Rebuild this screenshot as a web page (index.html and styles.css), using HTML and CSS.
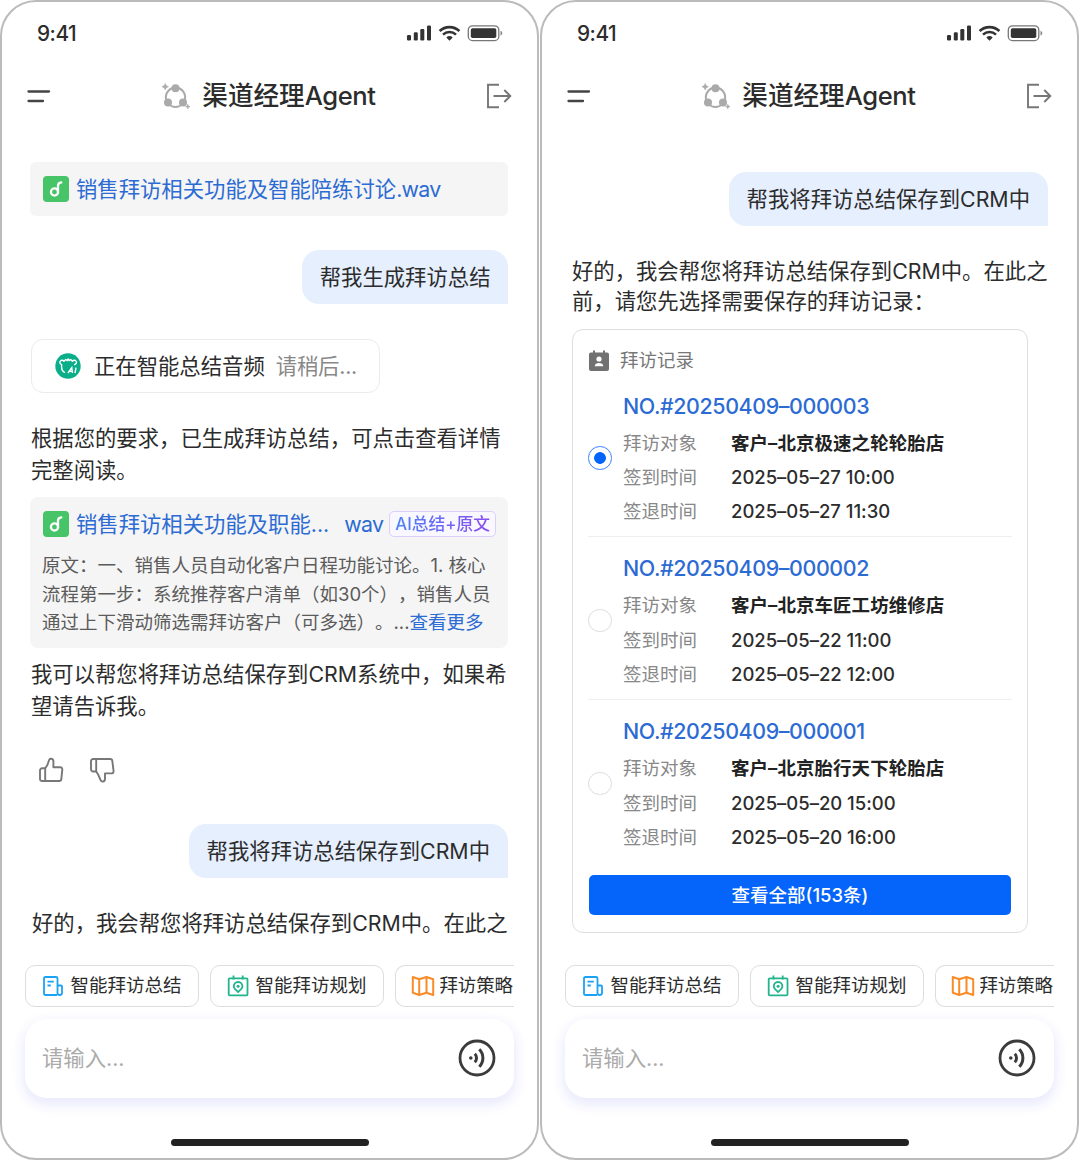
FILE: index.html
```html
<!DOCTYPE html>
<html lang="zh-CN">
<head>
<meta charset="utf-8">
<title>渠道经理Agent</title>
<link rel="stylesheet" href="styles.css">
</head>
<body>
<svg class="sprite" aria-hidden="true">
  <symbol id="i-status" viewBox="0 0 98 20">
    <g fill="#333">
      <rect x="1" y="12" width="4" height="5.5" rx="1.2"/><rect x="7.800" y="9.300" width="4" height="8.200" rx="1.200"/><rect x="14.300" y="6" width="4" height="11.500" rx="1.200"/><rect x="21" y="2.500" width="4" height="15" rx="1.200"/>
      <path d="M43.500 17.800l-3.200-3.300a4.700 4.700 0 0 1 6.400 0z"/>
      <rect x="64.800" y="5.300" width="25.500" height="9.800" rx="1.800"/>
      <path d="M94.500 7.800c2.400.8 2.400 4 0 4.800z" fill="#888"/>
    </g>
    <path d="M33.600 8a14.500 14.500 0 0 1 19.800 0M37 11.600a9.600 9.600 0 0 1 13 0" fill="none" stroke="#333" stroke-width="2.600"/>
    <rect x="62.300" y="2.800" width="30.500" height="14.800" rx="4.200" fill="none" stroke="#777" stroke-width="1.300"/>
  </symbol>
  <symbol id="i-menu" viewBox="0 0 24 16">
    <path d="M1.500 2.500h20.500M1.500 12h14.500" stroke="#444" stroke-width="2.300" stroke-linecap="round"/>
  </symbol>
  <symbol id="i-agent" viewBox="0 0 28 28">
    <circle cx="13.500" cy="15.300" r="9.700" fill="none" stroke="#aaa" stroke-width="2"/>
    <g fill="#aaa"><circle cx="13.500" cy="6.300" r="4"/><circle cx="6" cy="20.500" r="4"/><circle cx="21" cy="20.500" r="4"/>
    <path d="M3.200 1.500l1 2.200 2.200 1-2.200 1-1 2.200-1-2.200-2.200-1 2.200-1zM25.800 22.300l.6 1.700 1.700.6-1.700.6-.6 1.700-.6-1.700-1.700-.6 1.700-.6z" stroke="#aaa" stroke-width=".6"/></g>
  </symbol>
  <symbol id="i-exit" viewBox="0 0 26 26">
    <path d="M13 1.800H2v22.400h11M7.500 13H24M18.300 7l6 6-6 6" fill="none" stroke="#777" stroke-width="1.900"/>
  </symbol>
  <symbol id="i-audio" viewBox="0 0 26 26">
    <rect width="26" height="26" rx="4" fill="#47c368"/>
    <circle cx="11.500" cy="16" r="3.600" fill="none" stroke="#fff" stroke-width="2.300"/>
    <path d="M15 16.500V9.600c0-2 1-3.100 3.300-3.300" fill="none" stroke="#fff" stroke-width="2.300" stroke-linecap="round"/>
  </symbol>
  <symbol id="i-ai" viewBox="0 0 26 26">
    <circle cx="13" cy="13" r="12.700" fill="#0aaf89"/>
    <path d="M9.500 19.300c-2-.9-2.900-2.500-2.900-5.100v-2.700C4.500 11.200 4.200 8.500 6 7.500c1.300-.6 2.300-.2 3 .7l1.700-1.700 1.500 1.100 1-1.700 1 1.700 1.500-1.100L17.400 8.200c.7-.9 1.700-1.300 3-.7 1.700 1 1.300 3.500-.7 4" fill="none" stroke="#fff" stroke-width="1.400" stroke-linecap="round" stroke-linejoin="round"/>
    <path d="M13 20l3.800-5.300.6 5.300M14.500 18.400h3M20 20l1-5.300" fill="none" stroke="#fff" stroke-width="1.400"/>
  </symbol>
  <symbol id="i-up" viewBox="0 0 26 26">
    <path d="M7.200 11.300h-3A2.200 2.200 0 0 0 2 13.500v8.300A2.200 2.200 0 0 0 4.200 24h17c1.100 0 2-.8 2.100-1.800l1-9.600c.1-1.300-.8-2.300-2.100-2.300h-6.800V4.500c0-3.200-3.600-3.700-4.400-1.300L9.300 8.300zM7.200 11.300V24M7.200 11.300l2.100-3" fill="none" stroke="#777" stroke-width="1.900" stroke-linejoin="round"/>
  </symbol>
  <symbol id="i-down" viewBox="0 0 26 26">
    <path d="M7.200 14.500h-3A2.200 2.200 0 0 1 2 12.300V4.200A2.200 2.200 0 0 1 4.200 2h17c1.100 0 2 .8 2.100 1.800l1.300 10.300c.1 1.300-.8 2.300-2.100 2.300h-6.500v5.400c0 3.200-3.300 3.700-4.400 1.300L9.300 17.800zM7.200 14.500V2" fill="none" stroke="#777" stroke-width="1.900" stroke-linejoin="round"/>
  </symbol>
  <symbol id="i-doc" viewBox="0 0 22 22">
    <path d="M15 20H3.500C2.400 20 2 19.500 2 18.500V3.500C2 2.500 2.400 2 3.500 2H14c1 0 1.500.5 1.500 1.500V18c0 1.300.8 2 2 2s2.500-.7 2.500-2v-6.500c0-.7-.3-1-1-1h-3.500M5.500 6.700h6.300M5.500 10.500h3.300" fill="none" stroke="#1ba2f5" stroke-width="1.800"/>
  </symbol>
  <symbol id="i-plan" viewBox="0 0 22 22">
    <g fill="none" stroke="#22b48c" stroke-width="1.800"><rect x="1.700" y="3.300" width="18.800" height="17" rx="1"/><path d="M6.500.5v4M15.700.5v4M11.100 17c-3-2.400-4.300-4-4.300-5.700a4.300 4.300 0 0 1 8.600 0c0 1.700-1.300 3.300-4.300 5.700z"/></g>
    <circle cx="11.100" cy="11.300" r="1.500" fill="#22b48c"/>
  </symbol>
  <symbol id="i-map" viewBox="0 0 24 22">
    <path d="M1.800 2l6.400 2.200L15.500 2l6.700 2.200V20l-6.700-2.200L8.200 20l-6.400-2.200zM8.200 4.200V20M15.500 2v15.800" fill="none" stroke="#fa8c27" stroke-width="2" stroke-linejoin="round"/>
  </symbol>
  <symbol id="i-voice" viewBox="0 0 38 38">
    <circle cx="19" cy="19" r="17" fill="none" stroke="#3b3b3b" stroke-width="2.800"/>
    <circle cx="12.800" cy="19" r="1.800" fill="#3b3b3b"/>
    <path d="M16.800 14.800a6 6 0 0 1 0 8.400M21.300 10.200a12.600 12.600 0 0 1 0 17.600" fill="none" stroke="#3b3b3b" stroke-width="3"/>
  </symbol>
  <symbol id="i-contact" viewBox="0 0 22 22">
    <path d="M3 2.500h2V.5h2v2h8v-2h2v2h2c1.200 0 2 .7 2 2v14.500c0 1.200-.8 2-2 2H3c-1.200 0-2-.8-2-2V4.500c0-1.300.8-2 2-2z" fill="#717171"/>
    <circle cx="11" cy="9" r="2.600" fill="#fff"/><path d="M6.700 16.300c0-4.300 8.600-4.300 8.600 0z" fill="#fff"/>
  </symbol>
</svg>

<main class="screens">
  <section class="phone">
    <div class="status"><span>9:41</span><svg class="status-icons"><use href="#i-status"/></svg></div>
    <header class="header">
      <svg class="menu"><use href="#i-menu"/></svg>
      <h1 class="title"><svg class="agent"><use href="#i-agent"/></svg>渠道经理<span class="latin">Agent</span></h1>
      <svg class="exit"><use href="#i-exit"/></svg>
    </header>
    <div class="chat chat-summary">
      <div class="file"><svg class="audio"><use href="#i-audio"/></svg><a>销售拜访相关功能及智能陪练讨论<span class="ext">.wav</span></a></div>
      <div class="bubble bubble-first">帮我生成拜访总结</div>
      <div class="progress"><svg class="ai"><use href="#i-ai"/></svg><span>正在智能总结音频</span><span class="wait">请稍后...</span></div>
      <p class="text text-result">根据您的要求，已生成拜访总结，可点击查看详情<br>完整阅读。</p>
      <article class="summary">
        <div class="summary-head"><svg class="audio"><use href="#i-audio"/></svg><a class="summary-name">销售拜访相关功能及职能...</a><a class="ext">wav</a><span class="tag"><span class="tag-label">AI总结+原文</span></span></div>
        <p class="excerpt">原文：一、销售人员自动化客户日程功能讨论。1. 核心<br>流程第一步：系统推荐客户清单（如30个），销售人员<br>通过上下滑动筛选需拜访客户（可多选）。...<a>查看更多</a></p>
      </article>
      <p class="text text-offer">我可以帮您将拜访总结保存到CRM系统中，如果希<br>望请告诉我。</p>
      <div class="feedback"><svg><use href="#i-up"/></svg><svg><use href="#i-down"/></svg></div>
      <div class="bubble bubble-save">帮我将拜访总结保存到CRM中</div>
      <p class="text text-last">好的，我会帮您将拜访总结保存到CRM中。在此之</p>
    </div>
    <nav class="chips">
      <span class="chip"><svg><use href="#i-doc"/></svg>智能拜访总结</span>
      <span class="chip"><svg><use href="#i-plan"/></svg>智能拜访规划</span>
      <span class="chip chip-last"><svg class="map"><use href="#i-map"/></svg>拜访策略</span>
    </nav>
    <div class="input"><span>请输入...</span><svg><use href="#i-voice"/></svg></div>
    <div class="home"></div>
  </section>

  <section class="phone">
    <div class="status"><span>9:41</span><svg class="status-icons"><use href="#i-status"/></svg></div>
    <header class="header">
      <svg class="menu"><use href="#i-menu"/></svg>
      <h1 class="title"><svg class="agent"><use href="#i-agent"/></svg>渠道经理<span class="latin">Agent</span></h1>
      <svg class="exit"><use href="#i-exit"/></svg>
    </header>
    <div class="chat chat-records">
      <div class="bubble">帮我将拜访总结保存到CRM中</div>
      <p class="text text-choose">好的，我会帮您将拜访总结保存到CRM中。在此之<br>前，请您先选择需要保存的拜访记录：</p>
      <div class="records">
        <div class="records-head"><svg><use href="#i-contact"/></svg>拜访记录</div>
        <div class="record">
          <i class="radio checked"></i>
          <div><h2>NO.#20250409–000003</h2>
          <dl><dt>拜访对象</dt><dd class="customer">客户–北京极速之轮轮胎店</dd><dt>签到时间</dt><dd>2025–05–27 10:00</dd><dt>签退时间</dt><dd>2025–05–27 11:30</dd></dl></div>
        </div>
        <div class="record">
          <i class="radio"></i>
          <div><h2>NO.#20250409–000002</h2>
          <dl><dt>拜访对象</dt><dd class="customer">客户–北京车匠工坊维修店</dd><dt>签到时间</dt><dd>2025–05–22 11:00</dd><dt>签退时间</dt><dd>2025–05–22 12:00</dd></dl></div>
        </div>
        <div class="record">
          <i class="radio"></i>
          <div><h2>NO.#20250409–000001</h2>
          <dl><dt>拜访对象</dt><dd class="customer">客户–北京胎行天下轮胎店</dd><dt>签到时间</dt><dd>2025–05–20 15:00</dd><dt>签退时间</dt><dd>2025–05–20 16:00</dd></dl></div>
        </div>
        <button class="all">查看全部(153条)</button>
      </div>
    </div>
    <nav class="chips">
      <span class="chip"><svg><use href="#i-doc"/></svg>智能拜访总结</span>
      <span class="chip"><svg><use href="#i-plan"/></svg>智能拜访规划</span>
      <span class="chip chip-last"><svg class="map"><use href="#i-map"/></svg>拜访策略</span>
    </nav>
    <div class="input"><span>请输入...</span><svg><use href="#i-voice"/></svg></div>
    <div class="home"></div>
  </section>
</main>
</body>
</html>
```
FILE: styles.css
```css
* { box-sizing: border-box; }
body {
  margin: 0;
  background: #fff;
  color: #2c2c2c;
  font: 21.35px/31px Inter, "Noto Sans CJK SC", sans-serif;
  text-spacing-trim: space-all;
  white-space: nowrap;
}
h1, h2, p, dl, dd { margin: 0; font-weight: 400; }
a { color: #2c6bd3; }
svg { display: block; flex: none; }
.sprite { position: absolute; width: 0; height: 0; }
.screens { display: grid; grid-template-columns: 539px 539px; gap: 1px; }
.phone {
  display: flex;
  flex-direction: column;
  height: 1160px;
  border: 2.5px solid #bbb;
  border-radius: 36px;
  overflow: hidden;
}

.status { display: flex; justify-content: space-between; align-items: center; height: 62px; padding: 0 33px 0 35px; font-size: 20.8px; font-weight: 500; letter-spacing: -.5px; flex: none; }
.status-icons { width: 98px; height: 20px; }
.header { display: flex; justify-content: space-between; align-items: center; height: 64px; padding: 0 25px 0 25px; flex: none; }
.menu { width: 24px; height: 16px; margin-top: 2px; }
.exit { width: 26px; height: 26px; }
.title { display: flex; align-items: center; margin-left: 1px; padding-bottom: 1px; font-size: 25.6px; font-weight: 500; }
.agent { width: 28px; height: 28px; margin-right: 12px; }
.latin { letter-spacing: -.4px; }
.ext { letter-spacing: -.7px; }

.chat { display: flex; flex-direction: column; align-items: flex-start; height: 835px; flex: none; }
.chat-summary { padding: 34px 29px 0 28px; }
.file { display: flex; align-items: center; gap: 7px; align-self: stretch; height: 54px; padding-left: 13px; border-radius: 6px; background: #f5f5f5; }
.audio { width: 26px; height: 26px; }
.bubble { align-self: flex-end; height: 54px; padding: 0 17.5px; line-height: 54px; border-radius: 17px 17px 1px 17px; background: #e6effe; }
.bubble-first { margin-top: 34px; }
.progress { display: flex; align-items: center; height: 54px; width: 349px; margin: 35px 0 0 1px; padding-left: 23px; border: 1.5px solid #ebebeb; border-radius: 12px; }
.ai { width: 26px; height: 26px; margin-right: 13px; }
.wait { margin-left: 11px; color: #888; letter-spacing: -.2px; }
.text-result { margin: 30px 0 0 1px; line-height: 31.5px; }
.summary { align-self: stretch; height: 151px; margin-top: 11px; padding: 9px 12px 0 13px; border-radius: 8px; background: #f5f5f5; }
.summary-head { display: flex; align-items: center; height: 36px; }
.summary-name { margin: 0 15px 0 7px; }
.tag { margin-left: 6px; padding: 0 5px; border: 1.5px solid #dccffc; border-radius: 5px; background: #f9f7ff; font-size: 16.8px; line-height: 24px; font-weight: 500; }
.tag-label { background: linear-gradient(90deg, #4c83f6, #8a4cf0); background-clip: text; color: transparent; }
.excerpt { margin-top: 9px; color: #5b5b5b; font-size: 18.5px; line-height: 28.5px; margin-left: -1px; }
.text-offer { margin: 11px 0 0 1px; line-height: 31.5px; }
.feedback { display: flex; gap: 25px; margin: 35px 0 0 8px; }
.feedback svg { width: 26px; height: 26px; }
.bubble-save { margin-top: 41px; padding-left: 18px; padding-right: 18px; }
.text-last { margin: 30px 0 0 2px; }

.chat-records { padding: 43.5px 29px 0 30px; }
.chat-records .bubble { padding: 0 18px; }
.text-choose { margin-top: 30.5px; line-height: 30px; }
.records { width: 456px; height: 604px; margin-top: 13px; padding: 17px 15px 0; border: 1.5px solid #ddd; border-radius: 11px; }
.records-head { display: flex; align-items: center; gap: 10px; height: 27.5px; color: #777; font-size: 18.5px; }
.records-head svg { width: 22px; height: 22px; }
.record { display: flex; align-items: center; gap: 11.5px; height: 162.5px; padding-top: 5px; border-bottom: 1.5px solid #eee; }
.record:nth-of-type(4) { border-bottom: 0; }
.record h2 { margin: 4px 0; color: #2c6bd3; font-size: 21.4px; font-weight: 500; line-height: 31px; letter-spacing: -.38px; }
.radio { width: 23.5px; height: 23.5px; border: 1.5px solid #ddd; border-radius: 50%; flex: none; }
.checked { border-color: #3b82f6; background: radial-gradient(circle, #0565fb 5.5px, transparent 6.2px); }
.record dl { display: grid; grid-template-columns: 108px auto; grid-auto-rows: 34.2px; font-size: 18.5px; line-height: 34px; }
.record dt { color: #888; }
.record dd { font-weight: 500; letter-spacing: -.02px; }
.record .customer { color: #222; font-weight: 600; letter-spacing: .05px; }
.all { display: block; width: 422px; height: 40px; margin: 13px auto 0; padding: 0; border: 0; border-radius: 5px; background: #0565fb; color: #fff; font: 500 18.5px/40px Inter, "Noto Sans CJK SC", sans-serif; }

.chips { display: flex; gap: 11.5px; height: 42px; margin: 1.5px 23px 0; overflow: hidden; flex: none; }
.chip { display: flex; align-items: center; gap: 7px; width: 173.5px; padding-left: 15.5px; border: 1.5px solid #ddd; border-radius: 10px; font-size: 18.5px; line-height: 33px; flex: none; }
.chip svg { width: 22px; height: 22px; }
.chip .map { width: 24px; }
.chip-last { width: 119px; margin-right: -5px; padding-left: 14.5px; gap: 5px; border-right: 0; border-radius: 10px 0 0 10px; letter-spacing: -.15px; }
.input { display: flex; justify-content: space-between; align-items: center; height: 79px; margin: 12px 23px 0; padding: 0 18px 0 17px; border-radius: 22px; box-shadow: 0 5px 13px 2px #e9e9fd; color: #aaa; flex: none; }
.input svg { width: 38px; height: 38px; }
.home { width: 198px; height: 7px; margin: 41.5px auto 0; border-radius: 4px; background: #222; flex: none; }
```
